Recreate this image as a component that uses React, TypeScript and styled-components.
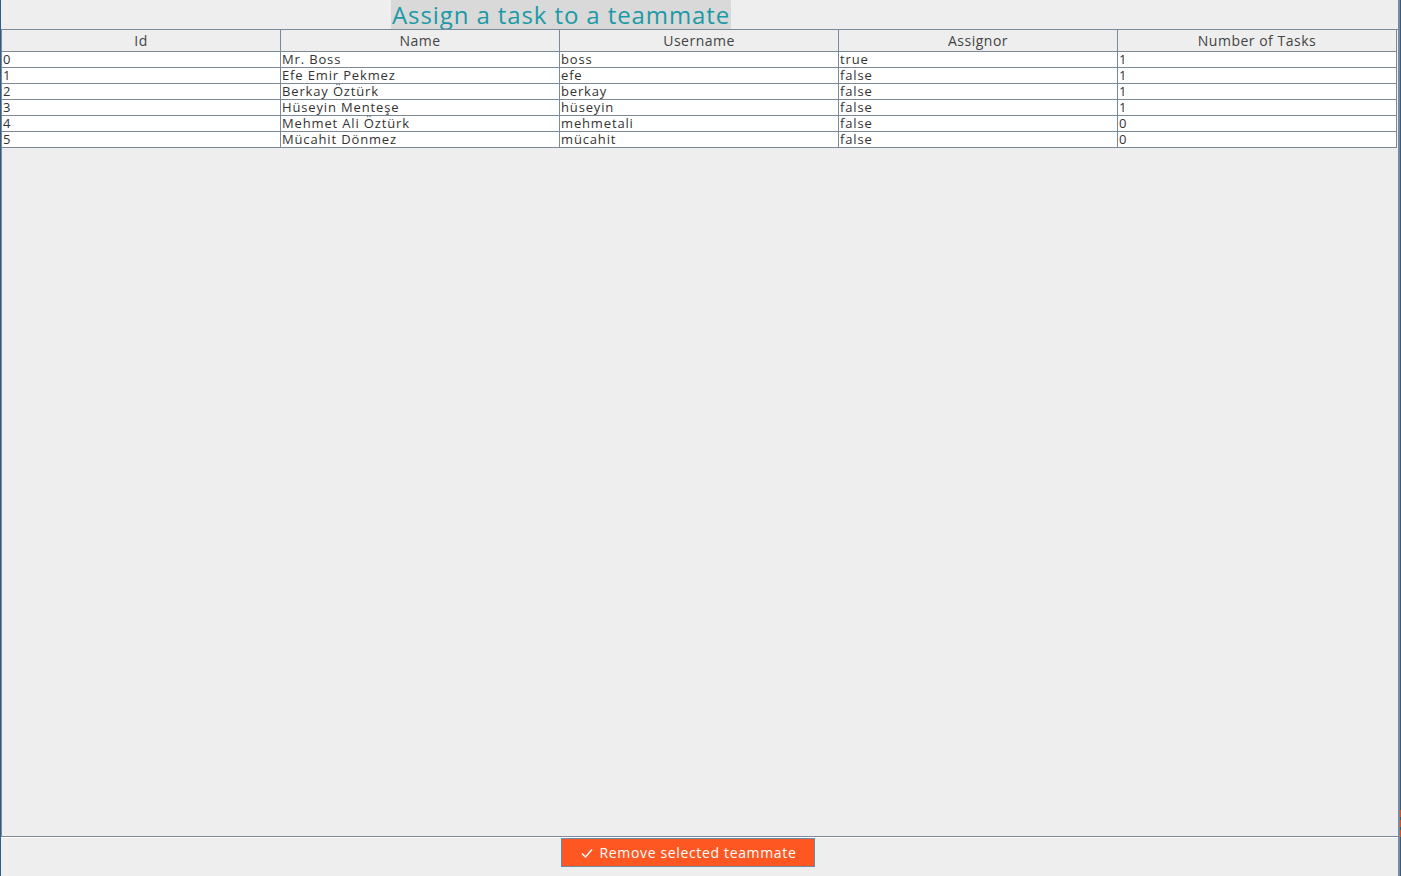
import React from "react";
import styled, { createGlobalStyle } from "styled-components";

const Global = createGlobalStyle`
  html, body { margin: 0; padding: 0; background: #eeeeee; }
  body { font-family: "Open Sans", "Noto Sans", sans-serif; overflow: hidden; }
`;

const Frame = styled.div`
  width: 1401px;
  height: 876px;
  box-sizing: border-box;
  border-left: 1px solid #2f5d88;
  border-right: 1px solid #2f5d88;
  background: #eeeeee;
  display: flex;
  flex-direction: column;
  position: relative;
`;

const Inner = styled.div`
  flex: 1;
  display: flex;
  flex-direction: column;
  border-right: 2px solid #7a8a9b;
  padding-right: 1px;
  box-sizing: border-box;
`;

const TitleRow = styled.div`
  height: 29px;
  display: flex;
  padding-left: 390px;
`;

const Title = styled.h1`
  margin: 0;
  height: 29px;
  line-height: 29px;
  padding: 0 1px;
  background: #d9d9d9;
  color: #1b9aa6;
  font-family: "Open Sans", sans-serif;
  font-weight: 400;
  font-size: 24px;
  letter-spacing: 0.9px;
  white-space: nowrap;
`;

const TableArea = styled.div`
  height: 808px;
  box-sizing: border-box;
  border: 1px solid #7a8a9b;
  border-right: none;
  box-shadow: 0 1px 0 #ffffff;
  margin-right: -1px;
  background: #eeeeee;
`;

const Grid = styled.div`
  display: grid;
  grid-template-columns: repeat(5, 279px);
`;

const HeadCell = styled.div`
  height: 21px;
  line-height: 21px;
  border-right: 1px solid #7a8a9b;
  border-bottom: 1px solid #7a8a9b;
  background: #eeeeee;
  color: #444444;
  font-size: 14px;
  letter-spacing: 0.5px;
  text-align: center;
  white-space: nowrap;
`;

const Cell = styled.div`
  height: 15px;
  line-height: 15px;
  border-right: 1px solid #7a8a9b;
  border-bottom: 1px solid #7a8a9b;
  background: #ffffff;
  color: #333333;
  font-size: 13px;
  letter-spacing: 0.85px;
  padding-left: 1px;
  white-space: nowrap;
`;

const Footer = styled.div`
  height: 39px;
  display: flex;
  justify-content: flex-start;
  padding-left: 560px;
  padding-top: 1px;
  box-sizing: border-box;
`;

const Button = styled.button`
  width: 254px;
  height: 29px;
  box-sizing: border-box;
  background: #ff5722;
  border: 1px solid #6b8aa3;
  color: #ffffff;
  font-family: "Open Sans", sans-serif;
  font-size: 14px;
  letter-spacing: 0.65px;
  display: flex;
  align-items: center;
  justify-content: center;
  gap: 6px;
  padding: 0;
  cursor: pointer;
`;

const RightMarks = styled.div`
  position: absolute;
  right: -1px;
  top: 810px;
  width: 1px;
  display: flex;
  flex-direction: column;
  gap: 3px;
`;

const Mark = styled.div`
  height: 7px;
  background: #d2502a;
`;

const headers = ["Id", "Name", "Username", "Assignor", "Number of Tasks"];
const rows: [string, string, string, string, string][] = [
  ["0", "Mr. Boss", "boss", "true", "1"],
  ["1", "Efe Emir Pekmez", "efe", "false", "1"],
  ["2", "Berkay Öztürk", "berkay", "false", "1"],
  ["3", "Hüseyin Menteşe", "hüseyin", "false", "1"],
  ["4", "Mehmet Ali Öztürk", "mehmetali", "false", "0"],
  ["5", "Mücahit Dönmez", "mücahit", "false", "0"],
];

export default function App() {
  return (
    <>
      <Global />
      <Frame>
        <Inner>
          <TitleRow>
            <Title>Assign a task to a teammate</Title>
          </TitleRow>
          <TableArea>
            <Grid>
              {headers.map((h) => (
                <HeadCell key={h}>{h}</HeadCell>
              ))}
              {rows.map((r) =>
                r.map((c, i) => <Cell key={r[0] + "-" + i}>{c}</Cell>)
              )}
            </Grid>
          </TableArea>
          <Footer>
            <Button>
              <svg width="14" height="14" viewBox="0 0 14 14" fill="none">
                <path d="M2 7.5 L5.5 11 L12 3.5" stroke="#ffffff" strokeWidth="1.5" />
              </svg>
              Remove selected teammate
            </Button>
          </Footer>
        </Inner>
        <RightMarks>
          <Mark />
          <Mark />
          <Mark />
        </RightMarks>
      </Frame>
    </>
  );
}
